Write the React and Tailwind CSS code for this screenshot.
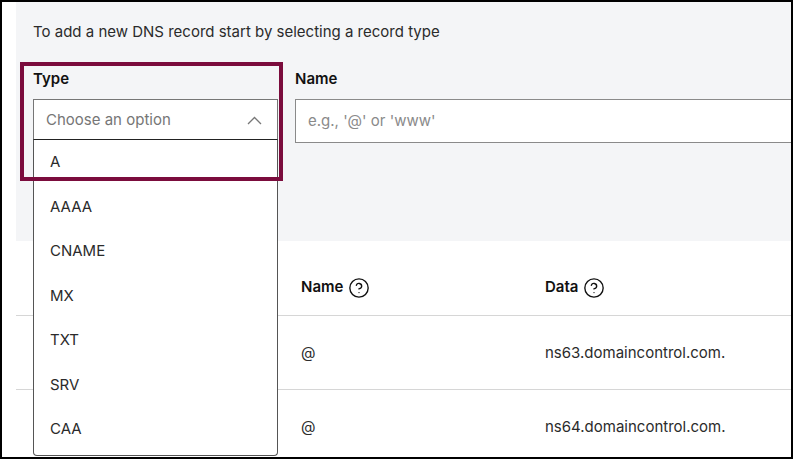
import { CircleHelp } from "lucide-react";

const options = ["A", "AAAA", "CNAME", "MX", "TXT", "SRV", "CAA"];

const rows = [
  { name: "@", data: "ns63.domaincontrol.com." },
  { name: "@", data: "ns64.domaincontrol.com." },
];

function HelpIcon() {
  return <CircleHelp className="w-[22px] h-[22px] text-[#111]" strokeWidth={1.5} />;
}

export default function App() {
  return (
    <div className="w-[794px] h-[461px] bg-white" style={{ fontFamily: "Inter, 'Liberation Sans', sans-serif" }}>
      <div className="relative w-[793px] h-[459px] border-2 border-black bg-white overflow-hidden pl-[14px]">
        {/* add record panel */}
        <div className="bg-[#f4f5f7] h-[239px] pl-[17px] pt-[20px]">
          <p className="text-[15px] text-[#2b2b2b] leading-[20px]">
            To add a new DNS record start by selecting a record type
          </p>
          <div className="flex gap-[17px] mt-[27px]">
            <div className="w-[245px] shrink-0">
              <div className="text-[15px] font-semibold text-[#111] leading-[20px]">Type</div>
              <div className="mt-[10px] h-[43px] bg-white border border-[#767676] border-b-[#222] flex items-center justify-between pl-[12px] pr-[15px]">
                <span className="text-[15px] text-[#767676]">Choose an option</span>
                <svg width="15" height="9" viewBox="0 0 15 9" fill="none" stroke="#777" strokeWidth="1.3">
                  <path d="M1 8 L7.5 1.5 L14 8" />
                </svg>
              </div>
            </div>
            <div className="w-[520px] shrink-0">
              <div className="text-[15px] font-semibold text-[#111] leading-[20px]">Name</div>
              <div className="mt-[10px] h-[44px] bg-white border border-[#8a8a8a] flex items-center pl-[12px]">
                <span className="text-[15px] text-[#8a8a8a]">e.g., '@' or 'www'</span>
              </div>
            </div>
          </div>
        </div>

        {/* records table */}
        <div className="h-[74px] grid grid-cols-[285px_244px_1fr] items-center pt-[19px]">
          <div />
          <div className="flex items-center gap-[5px] text-[15px] font-semibold text-[#111]">
            Name <HelpIcon />
          </div>
          <div className="flex items-center gap-[5px] text-[15px] font-semibold text-[#111]">
            Data <HelpIcon />
          </div>
        </div>
        {rows.map((r, i) => (
          <div key={i} className="h-[74px] border-t border-[#d6d6d6] grid grid-cols-[285px_244px_1fr] items-center pt-[2px]">
            <div />
            <div className="text-[15px] text-[#2b2b2b]">{r.name}</div>
            <div className="text-[15px] text-[#2b2b2b]">{r.data}</div>
          </div>
        ))}

        {/* open dropdown list */}
        <ul className="absolute left-[31px] top-[137px] w-[245px] h-[317px] bg-white border border-[#555] border-t-[#222] rounded-b-[4px]">
          {options.map((o) => (
            <li key={o} className="h-[44.5px] flex items-center pl-[16px] text-[15px] text-[#2b2b2b]">
              {o}
            </li>
          ))}
        </ul>

        {/* highlight annotation */}
        <div className="absolute left-[18px] top-[60px] w-[263px] h-[119px] border-[4px] border-[#7b0c3d]" />
      </div>
    </div>
  );
}
